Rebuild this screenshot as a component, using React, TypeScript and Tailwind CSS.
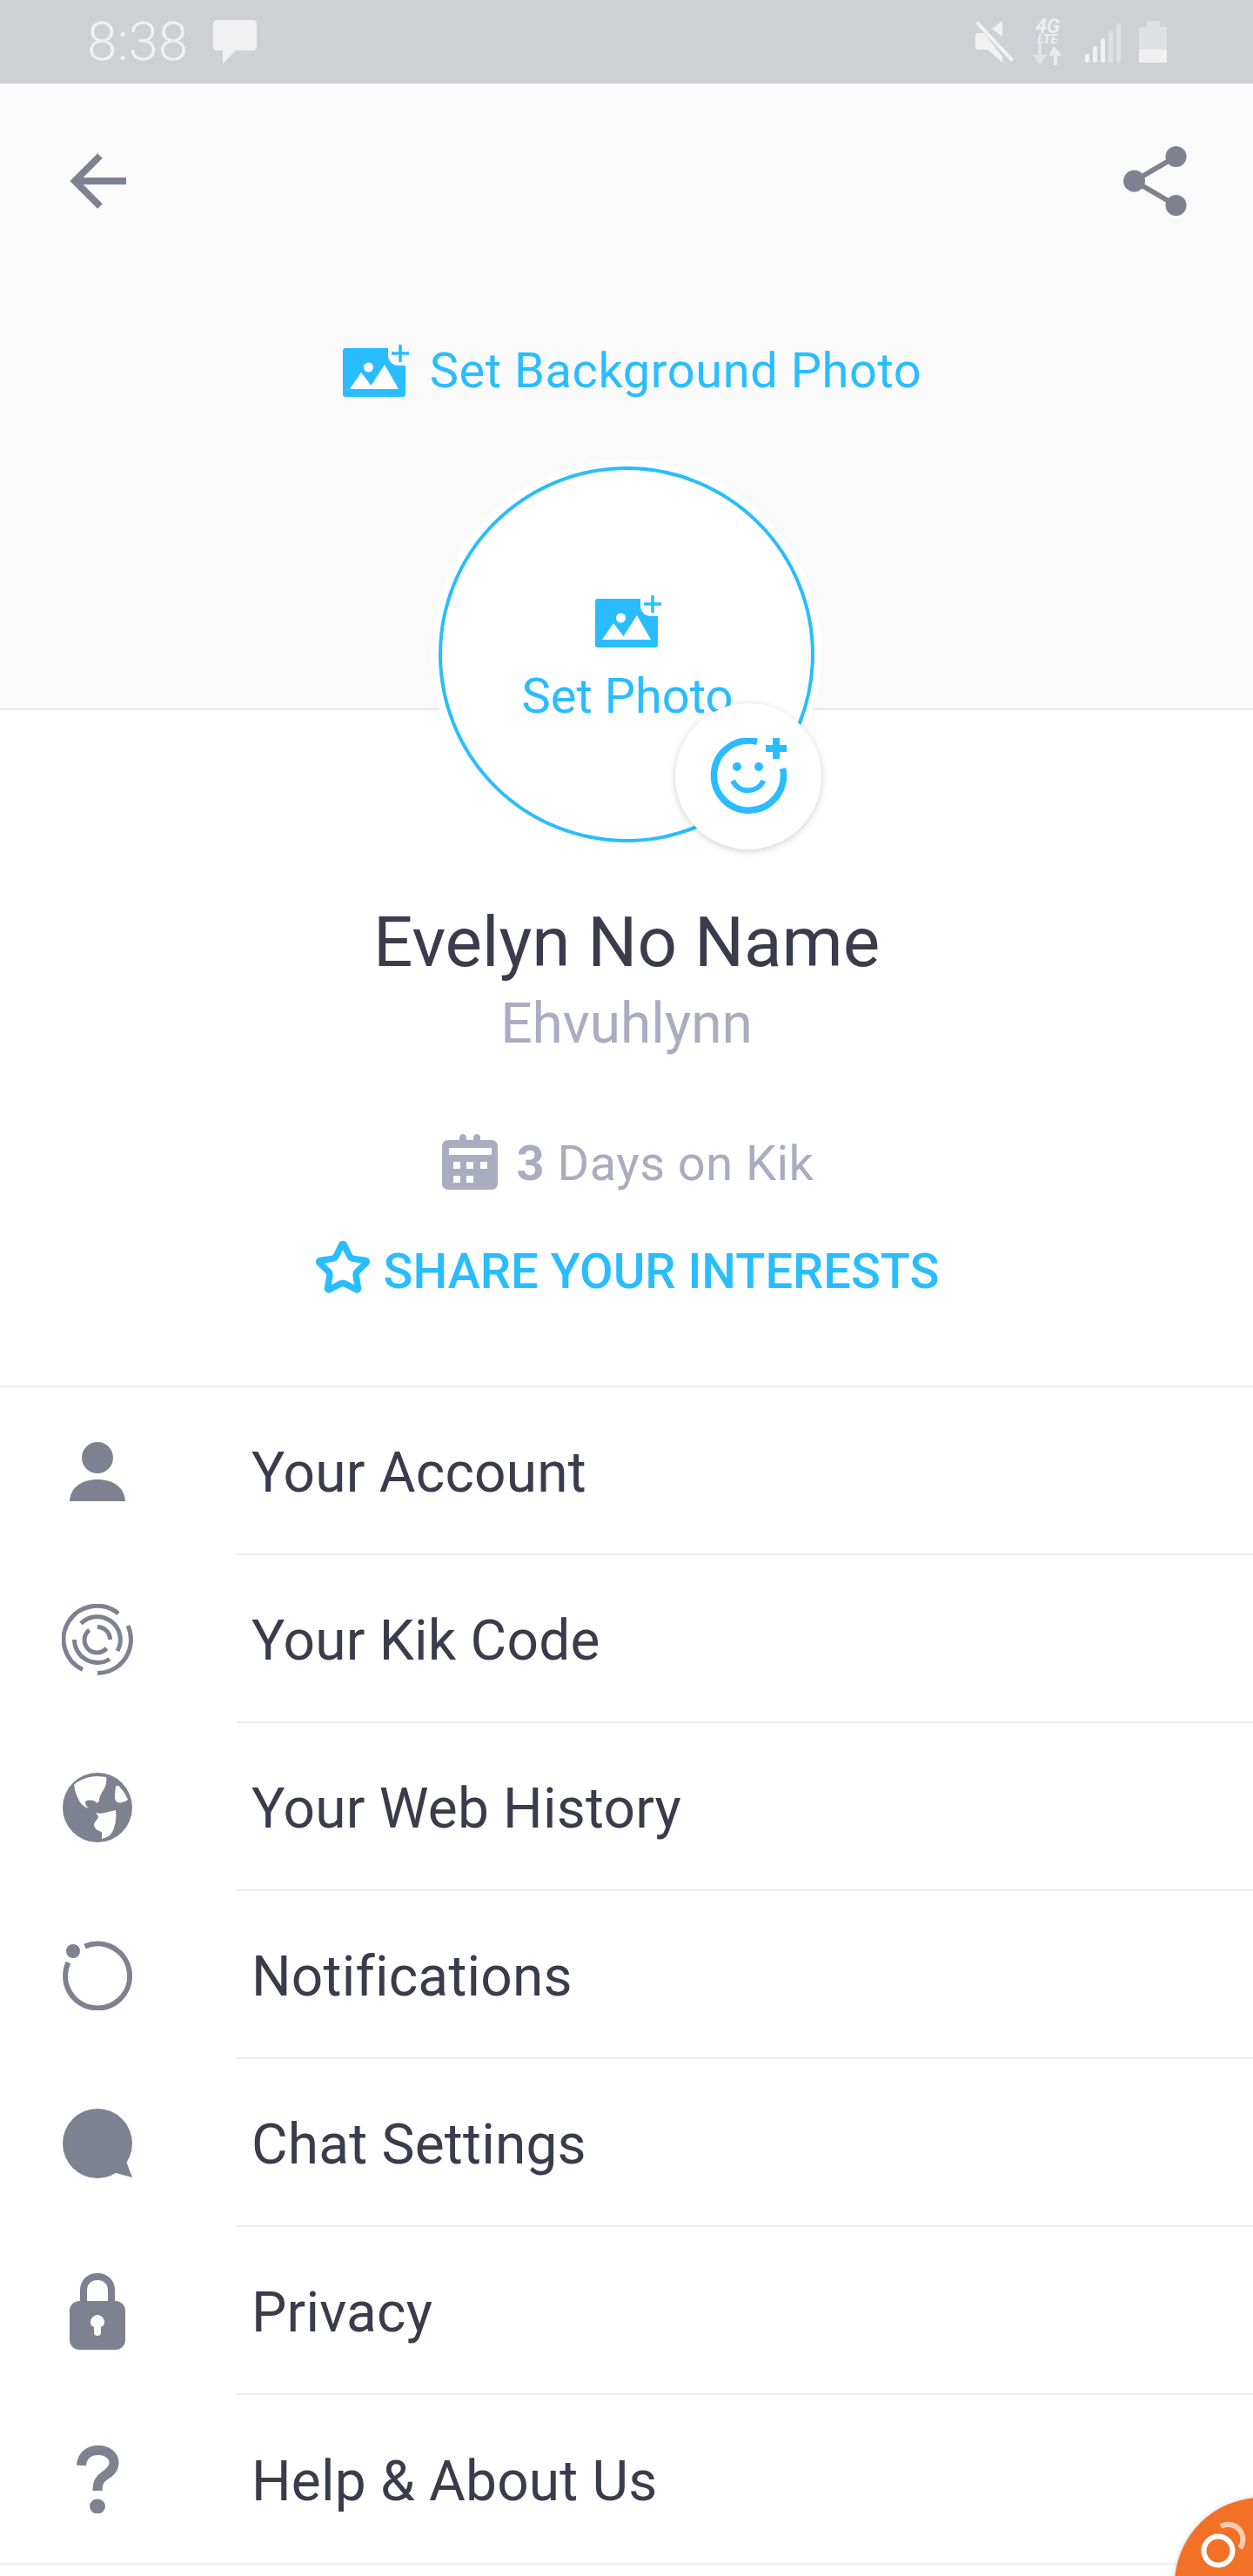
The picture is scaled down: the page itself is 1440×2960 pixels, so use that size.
import React from "react";
import { Star } from "lucide-react";

const GRAY = "#7e818f";
const BLUE = "#29bdff";

const PhotoPlusIcon = () => (
  <svg width="77" height="60" viewBox="0 0 77 60" fill="none">
    <path d="M3 4H52V12C52 19 57 24 64 24H72V57C72 59 71 60 69 60H3C1 60 0 59 0 57V7C0 5 1 4 3 4Z" fill={BLUE} />
    <circle cx="29.5" cy="26" r="5.5" fill="#fff" />
    <path d="M8 51L21 32L32.5 47L48 23L64 51Z" fill="#fff" />
    <path d="M66 0V20M56 10H76" stroke={BLUE} strokeWidth="3.5" />
  </svg>
);

const SmileIcon = () => (
  <svg width="88" height="88" viewBox="0 0 88 88" fill="none">
    <path d="M54 4.3A40 40 0 1 0 83.6 35" stroke={BLUE} strokeWidth="7.5" />
    <path d="M76 0V24M64 12H88" stroke={BLUE} strokeWidth="8" />
    <circle cx="31" cy="33" r="5" fill={BLUE} />
    <circle cx="56" cy="33" r="5" fill={BLUE} />
    <path d="M26 49C33 64 54 64 61.5 49" stroke={BLUE} strokeWidth="6" />
  </svg>
);

const menuIcons: Record<string, React.ReactNode> = {
  account: (
    <svg width="64" height="68" viewBox="0 0 64 68" fill={GRAY}>
      <ellipse cx="32" cy="18" rx="18" ry="18" />
      <path d="M0 68C1 52 14 43 32 43C50 43 63 52 64 68Z" />
    </svg>
  ),
  code: (
    <svg width="82" height="82" viewBox="-41 -41 82 82" fill="none" stroke={GRAY} strokeWidth="5">
      <path d="M24 -30A38.5 38.5 0 1 0 -17 34.5" />
      <path d="M35 -16A38.5 38.5 0 0 1 0 38.5" />
      <path d="M-19 -18.5A26.5 26.5 0 0 1 23 13" />
      <path d="M14 22.5A26.5 26.5 0 0 1 -26.5 0" />
      <path d="M0 -14.5A14.5 14.5 0 0 1 14.5 0" />
      <path d="M10.5 10A14.5 14.5 0 1 1 -9.3 -11" />
    </svg>
  ),
  web: (
    <svg width="80" height="80" viewBox="0 0 80 80">
      <circle cx="40" cy="40" r="40" fill={GRAY} />
      <path d="M13 13.5C20 8 30 4 40 4L50 5C51 10 50 13 48 18C45 23 42 27 42 32L40 35C37 33 35 31 33 32C30 31 26 32 26 34C26 37 28 39 30 41C24 39 20 35 18 30C15 25 14 19 13 13.5Z" fill="#fff" />
      <path d="M61 15.5C63 14 65 15 66 17C70 21 73 26 75 31C71 34 66 35 63 34C60 32 60 29 60 26Z" fill="#fff" />
      <path d="M38 46C41 47 45 47 48 46C52 45 57 44 61 43C62 49 61 55 60 60C59 65 57 69 54 72C51 74 48 75 45 76L45 68C41 67 37 65 36 60C36 57 39 55 41 51C41 49 39 48 38 46Z" fill="#fff" />
    </svg>
  ),
  notifications: (
    <svg width="80" height="80" viewBox="0 0 80 80" fill="none">
      <path d="M25.5 6.5A37 37 0 1 1 6.5 25" stroke={GRAY} strokeWidth="6" />
      <circle cx="12" cy="12" r="8" fill={GRAY} />
    </svg>
  ),
  chat: (
    <svg width="80" height="80" viewBox="0 0 80 80" fill={GRAY}>
      <circle cx="40" cy="40" r="40" />
      <path d="M72 58L80 79L58 73Z" />
    </svg>
  ),
  privacy: (
    <svg width="64" height="88" viewBox="0 0 64 88" fill="none">
      <path d="M16 34V20C16 10 23 4 32 4C41 4 48 10 48 20V34" stroke={GRAY} strokeWidth="8" />
      <path fillRule="evenodd" d="M11 32H53C59 32 64 37 64 43V77C64 83 59 88 53 88H11C5 88 0 83 0 77V43C0 37 5 32 11 32ZM24 56C24 59 25 61 28 62V69C28 71 30 72 32 72C34 72 36 71 36 69V62C39 61 40 59 40 56C40 52 36 48 32 48C28 48 24 52 24 56Z" fill={GRAY} />
    </svg>
  ),
  help: (
    <svg width="49" height="78" viewBox="0 0 49 78" fill="none">
      <path d="M5.5 23C6 12 14 5.5 25 5.5C36 5.5 43 12 43 20C43 27 38 31 32 35C27 38.5 24 42 24 52" stroke={GRAY} strokeWidth="11" />
      <ellipse cx="24" cy="70" rx="9" ry="8.5" fill={GRAY} />
    </svg>
  ),
};

const menu = [
  { id: "account", label: "Your Account" },
  { id: "code", label: "Your Kik Code" },
  { id: "web", label: "Your Web History" },
  { id: "notifications", label: "Notifications" },
  { id: "chat", label: "Chat Settings" },
  { id: "privacy", label: "Privacy" },
  { id: "help", label: "Help & About Us" },
];

const StatusBar = () => (
  <div className="flex h-[96px] items-center justify-between bg-[#cfd0d4] pl-[100px] pr-[99px] text-[#f1f1f2]">
    <div className="flex items-center gap-[29px]">
      <span className="text-[62px] font-light leading-[96px]">8:38</span>
      <svg width="50" height="50" viewBox="0 0 50 50" fill="#f1f1f2">
        <path d="M4 0H46C48 0 50 2 50 4V31C50 33 48 35 46 35H26L11 50V35H4C2 35 0 33 0 31V4C0 2 2 0 4 0Z" />
      </svg>
    </div>
    <div className="flex items-center">
      {/* muted */}
      <svg width="44" height="48" viewBox="0 0 44 48" fill="#f1f1f2">
        <path d="M31 0V18L19 9Z" />
        <path d="M0 17C0 15 1 14 3 14H10L31 41V48L14 33H3C1 33 0 32 0 30Z" />
        <path d="M0 3L3 0L44 44L41 47Z" />
      </svg>
      <div className="ml-[22px] flex w-[34px] flex-col items-center italic">
        <span className="text-[23px] font-bold leading-[17px] opacity-90">4G</span>
        <span className="text-[15px] font-bold leading-[12px] opacity-90">LTE</span>
        <svg width="34" height="24" viewBox="0 0 34 24">
          <path d="M6 0H10V12H16L8 23L0 12H6Z" fill="#e2e3e6" />
          <path d="M24 2L34 13H28V24H24V13H18Z" fill="#e8e9eb" />
        </svg>
      </div>
      <svg width="41" height="45" viewBox="0 0 41 45" className="ml-[26px] mt-[3px]">
        <rect x="0" y="35" width="5" height="10" rx="2.5" fill="#f1f1f2" />
        <rect x="9" y="26" width="5" height="19" rx="2.5" fill="#f1f1f2" />
        <rect x="18" y="17" width="5" height="28" rx="2.5" fill="#f1f1f2" />
        <rect x="27" y="8" width="5" height="37" rx="2.5" fill="#dfe0e3" />
        <rect x="36" y="0" width="5" height="45" rx="2.5" fill="#dfe0e3" />
      </svg>
      <svg width="32" height="48" viewBox="0 0 32 48" className="ml-[21px]">
        <path d="M9 0H24V7H30C31 7 32 8 32 9V33H0V9C0 8 1 7 2 7H9Z" fill="#dfe0e3" />
        <path d="M0 33H32V46C32 47 31 48 30 48H2C1 48 0 47 0 46Z" fill="#f1f1f2" />
      </svg>
    </div>
  </div>
);

const Avatar = () => (
  <div className="relative z-10 mt-[72px] flex h-[448px] w-[448px] shrink-0 items-center justify-center rounded-full bg-white">
    <div className="flex h-[432px] w-[432px] flex-col items-center rounded-full border-4 border-[#29bdff] pt-[144px]">
      <div className="ml-[5px]">
        <PhotoPlusIcon />
      </div>
      <span className="ml-[2px] mt-[23px] text-[56px] leading-[66px] text-[#29bdff]">Set Photo</span>
    </div>
    <div className="absolute left-[280px] top-[280px] flex h-[168px] w-[168px] items-center justify-center rounded-full bg-white shadow-[0_2px_8px_rgba(0,0,0,0.18)]">
      <SmileIcon />
    </div>
  </div>
);

export default function App() {
  return (
    <div
      className="relative h-[2960px] w-[1440px] overflow-hidden bg-white"
      style={{ fontFamily: "Roboto, sans-serif" }}
    >
      <StatusBar />

      <div className="flex h-[720px] flex-col items-center border-b-2 border-[#e6e6ec] bg-[#fafafa]">
        <div className="flex h-[80px] w-full shrink-0 items-center justify-between pl-[80px] pr-[76px] mt-[72px]">
          <svg width="65" height="64" viewBox="0 0 65 64" fill="none" stroke={GRAY} strokeWidth="8">
            <path d="M65 32H6" />
            <path d="M35 3L6 32L35 61" />
          </svg>
          <svg width="73" height="80" viewBox="0 0 73 80" fill={GRAY}>
            <path d="M12.5 40L60.5 12M12.5 40L60.5 68" stroke={GRAY} strokeWidth="6" />
            <circle cx="60.5" cy="12" r="12" />
            <circle cx="12.5" cy="40" r="12.5" />
            <circle cx="60.5" cy="68" r="12" />
          </svg>
        </div>
        <div className="ml-[13px] mt-[148px] flex h-[60px] shrink-0 items-center gap-[23px]">
          <PhotoPlusIcon />
          <span className="text-[56px] leading-[60px] tracking-[0.55px] text-[#29bdff]">Set Background Photo</span>
        </div>
        <Avatar />
      </div>

      <div className="flex h-[778px] flex-col items-center border-b-2 border-[#ececf0] pt-[217px]">
        <h1 className="text-[80px] font-normal leading-[100px] text-[#3a3c4c]">Evelyn No Name</h1>
        <p className="mt-[4px] text-[64px] leading-[80px] text-[#a9adbf]">Ehvuhlynn</p>
        <div className="ml-[3px] mt-[86px] flex h-[64px] items-center gap-[22px] text-[56px] text-[#a9adbf]">
          <svg width="64" height="64" viewBox="0 0 64 64" fill="#a9adbf">
            <path
              fillRule="evenodd"
              d="M20 4C20 2 22 0 24 0C26 0 28 2 28 4V7H36V4C36 2 38 0 40 0C42 0 44 2 44 4V7H57C61 7 64 10 64 14V57C64 61 61 64 57 64H7C3 64 0 61 0 57V14C0 10 3 7 7 7H20ZM8 16V24H57V16ZM13 32V40H21V32ZM28 32V40H36V32ZM44 32V40H52V32ZM13 48V56H21V48ZM28 48V56H36V48Z"
            />
          </svg>
          <span className="mt-[3px] leading-[64px] tracking-[0.45px]">
            <span className="font-bold">3</span> Days on Kik
          </span>
        </div>
        <div className="mt-[62px] flex h-[64px] items-center gap-[14px] text-[#29bdff]">
          <Star size={66} strokeWidth={2.7} className="-mt-[8px]" />
          <span className="text-[56px] font-medium leading-[64px]">SHARE YOUR INTERESTS</span>
        </div>
      </div>

      <ul className="border-b-2 border-[#ececf0]">
        {menu.map((item, i) => (
          <li key={item.id} className="flex h-[193px] items-stretch">
            <div className="flex w-[224px] shrink-0 items-center justify-center">{menuIcons[item.id]}</div>
            <div
              className={
                i < menu.length - 1
                  ? "ml-[48px] flex flex-1 items-center border-b-2 border-[#ececf0] pl-[17px]"
                  : "ml-[48px] flex flex-1 items-center pl-[17px]"
              }
            >
              <span className="mt-[7px] text-[64px] leading-[80px] tracking-[0.2px] text-[#3a3c4c]">{item.label}</span>
            </div>
          </li>
        ))}
      </ul>

      {/* floating widget, clipped by the corner */}
      <div className="absolute left-[1350px] top-[2870px] h-[200px] w-[200px] rounded-full bg-[#f37027] shadow-[0_0_4px_rgba(0,0,0,0.25)]">
        <svg width="90" height="90" viewBox="0 0 90 90" fill="none">
          <circle cx="50" cy="61" r="16.5" stroke="#fff" strokeWidth="6" />
          <path d="M53 33A17 17 0 0 1 75 58" stroke="#fbcdb0" strokeWidth="6" />
        </svg>
      </div>
    </div>
  );
}
